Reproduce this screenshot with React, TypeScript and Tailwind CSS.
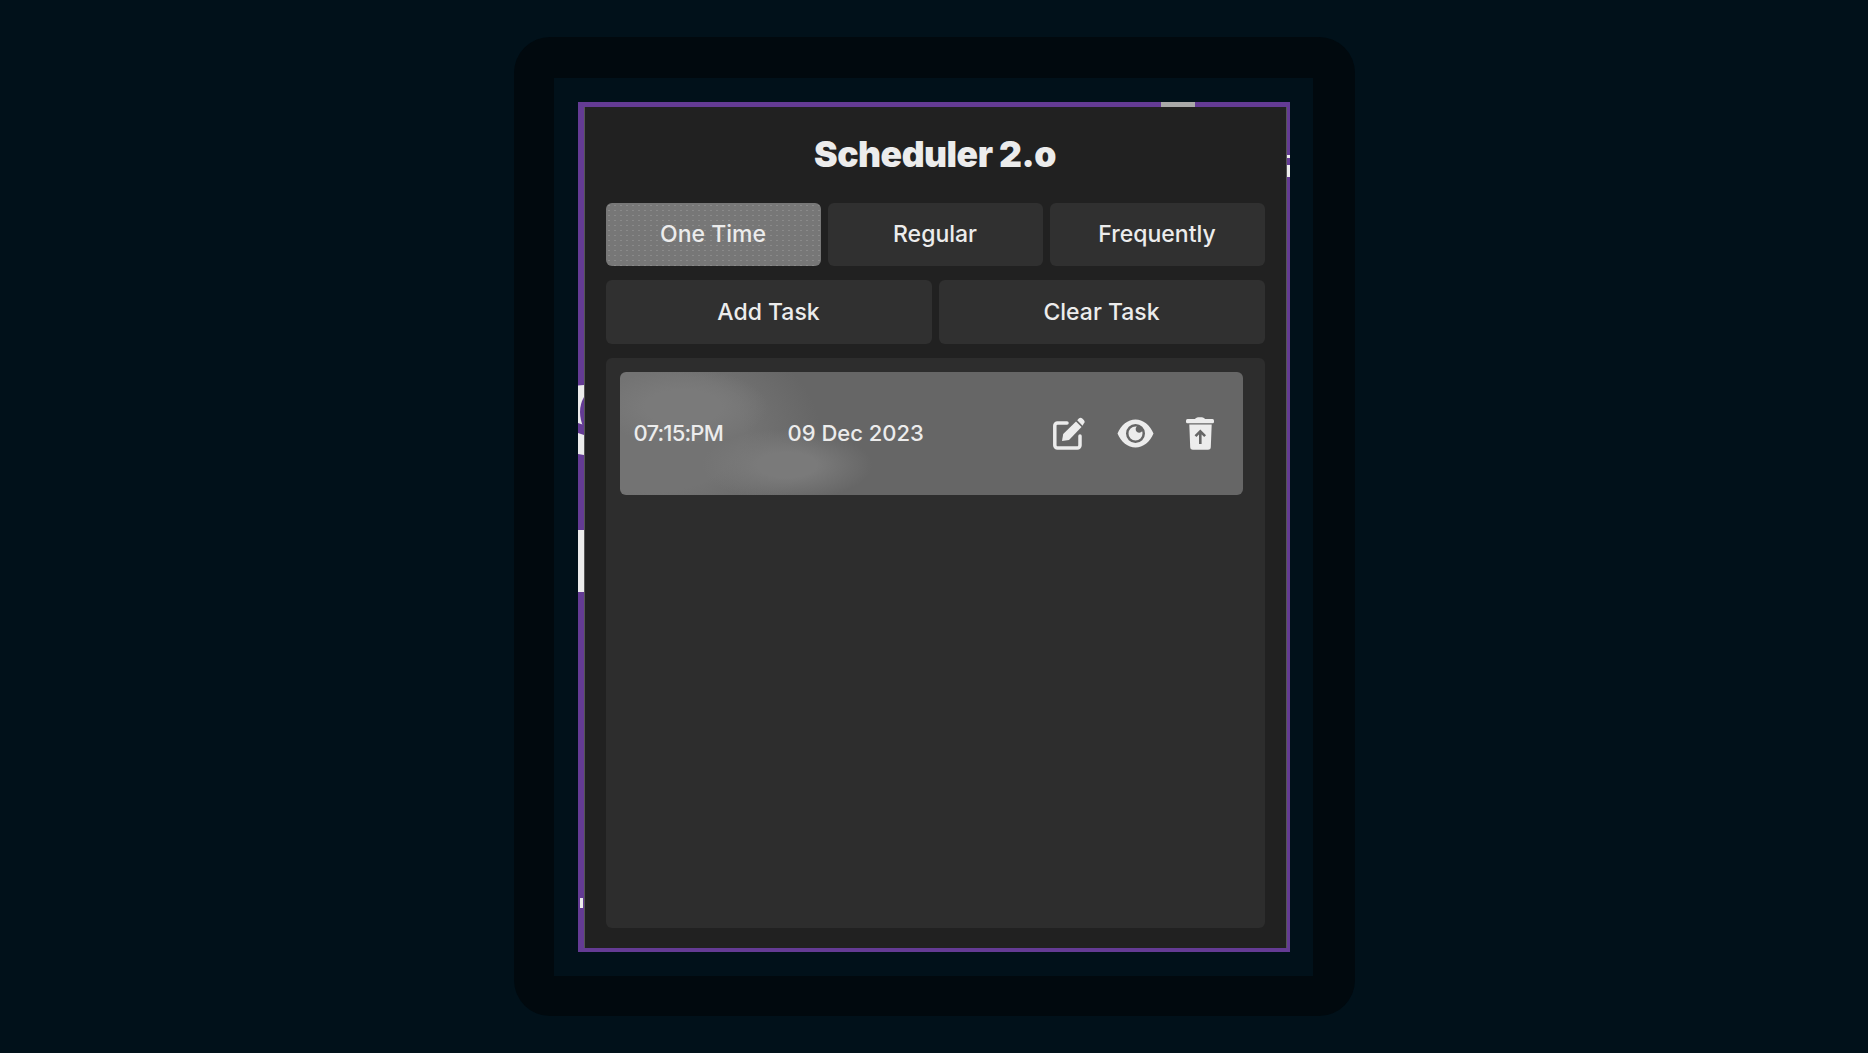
const font = "font-['Inter','Liberation_Sans',sans-serif]";
const btn = "flex-1 rounded-[6px] flex items-center justify-center text-[23px] font-medium text-[#ececec]";

function EditIcon() {
  return (
    <svg viewBox="0 0 32 33" className="w-[32px] h-[33px]" fill="#ececec">
      <path d="M14 6H4.5A2.7 2.7 0 0 0 1.8 8.7V28.3A2.7 2.7 0 0 0 4.5 31H24.3A2.7 2.7 0 0 0 27 28.3V19" fill="none" stroke="#ececec" strokeWidth="3.5" strokeLinecap="round" />
      <path d="M9 24L10.2 17L23 4.5L28.5 10L16 23Z" />
      <path d="M24.2 3.2L25.8 1.6a2.5 2.5 0 0 1 3.5 0l1.5 1.5a2.5 2.5 0 0 1 0 3.5L29.6 8.7Z" />
    </svg>
  );
}

function EyeIcon() {
  return (
    <svg viewBox="0 0 37 29" className="w-[37px] h-[29px]" fill="#ececec">
      <path
        fillRule="evenodd"
        d="M0.5 14.5C4 6 11 0.5 18.5 0.5S33 6 36.5 14.5C33 23 26 28.5 18.5 28.5S4 23 0.5 14.5ZM18.5 5A9.5 9.5 0 1 0 18.5 24A9.5 9.5 0 1 0 18.5 5Z"
      />
      <path d="M18.5 7.5A7 7 0 1 0 25.5 14.5C25.5 13.7 25.4 13 25.1 12.3C24.5 13.2 23.4 13.7 22.3 13.7C20.3 13.7 18.7 12.2 18.7 10.2C18.7 9.2 19.2 8.1 20 7.6C19.5 7.5 19 7.5 18.5 7.5Z" />
    </svg>
  );
}

function TrashIcon() {
  return (
    <svg viewBox="0 0 28 33" className="w-[28px] h-[33px]">
      <path d="M9 2.2C9.5 0.8 11 0.2 14 0.2S18.500 0.800 19 2.200Z" fill="#ececec" />
      <rect x="0" y="2" width="28" height="4.200" rx="1.500" fill="#ececec" />
      <path d="M3.300 7.500H25.700L24.800 30A2.800 2.800 0 0 1 22 32.800H7A2.800 2.800 0 0 1 4.200 30Z" fill="#ececec" />
      <path d="M14.300 27V14.500M9.500 19.200L14.300 14.300L19.100 19.200" fill="none" stroke="#666666" strokeWidth="2.600" />
    </svg>
  );
}

function LeftEdgeArt() {
  return (
    <svg viewBox="0 0 6 207" className="w-[6px] h-[207px]">
      <path d="M0 0.5L6 0V40L0 38Z" fill="#ececec" />
      <path d="M6 12Q-2 26 6 44Z" fill="#643b94" />
      <path d="M0 48L6 50V70L0 69Z" fill="#ececec" />
      <path d="M0 145H6V207H0Z" fill="#ececec" />
    </svg>
  );
}

export default function App() {
  return (
    <div className={`${font} w-full h-[1053px] overflow-hidden bg-[#01111a] flex justify-center pt-[37px]`}>
      <div className="w-[841px] h-[979px] rounded-[36px] bg-[#01090e] pt-[41px] pl-[40px]">
        <div className="w-[759px] h-[898px] bg-[#01111a] pt-[24px] pl-[24px]">
          <div className="relative w-[712px] h-[850px] border-[#643b94] border-t-[5px] border-l-[6px] border-r-[3px] border-b-[4px] flex flex-col">
            <div className="flex-1 flex flex-col bg-[#212121] border-x border-[#565656] pl-[21px] pr-[21px] pb-[20px]">
              <h1 className="h-[96px] flex items-center justify-center text-[35.5px] font-black tracking-[-0.5px] text-[#ececec]">
                Scheduler 2.o
              </h1>
              <div className="flex gap-[7px] h-[63px]">
                <button className={`${btn} bg-[#777777] bg-[radial-gradient(#8a8a8a_0.7px,transparent_0.9px)] bg-[size:6px_5px]`}>One Time</button>
                <button className={`${btn} bg-[#303030]`}>Regular</button>
                <button className={`${btn} bg-[#303030]`}>Frequently</button>
              </div>
              <div className="flex gap-[7px] h-[64px] mt-[14px]">
                <button className={`${btn} bg-[#303030]`}>Add Task</button>
                <button className={`${btn} bg-[#303030]`}>Clear Task</button>
              </div>
              <div className="mt-[14px] flex-1 rounded-[6px] bg-[#2d2d2d] pl-[14px] pr-[22px] pt-[14px]">
                <div className="h-[123px] rounded-[6px] bg-[#666666] bg-[radial-gradient(ellipse_85px_38px_at_63px_35px,#7a7a7a_45%,transparent_100%),radial-gradient(ellipse_85px_36px_at_167px_93px,#7a7a7a_35%,transparent_100%),radial-gradient(ellipse_170px_110px_at_30px_60px,#737373_55%,transparent_100%)] flex items-center pl-[14px] pr-[29px]">
                  <span className="w-[154px] text-[22px] font-medium tracking-[-0.8px] text-[#ececec]">07:15:PM</span>
                  <span className="text-[22px] font-medium text-[#ececec]">09 Dec 2023</span>
                  <div className="ml-auto flex items-center gap-[32px]">
                    <EditIcon />
                    <EyeIcon />
                    <TrashIcon />
                  </div>
                </div>
              </div>
            </div>
            <div className="absolute left-[-6px] top-[278px]"><LeftEdgeArt /></div>
            <div className="absolute left-[-4px] top-[791px] w-[3px] h-[10px] bg-[#ececec]" />
            <div className="absolute top-[-5px] left-[577px] w-[34px] h-[5px] bg-[#a9a9a9]" />
            <div className="absolute right-[-3px] top-[48px] w-[3px] h-[3px] bg-[#ececec]" />
            <div className="absolute right-[-3px] top-[58px] w-[3px] h-[12px] bg-[#ececec]" />
          </div>
        </div>
      </div>
    </div>
  );
}
